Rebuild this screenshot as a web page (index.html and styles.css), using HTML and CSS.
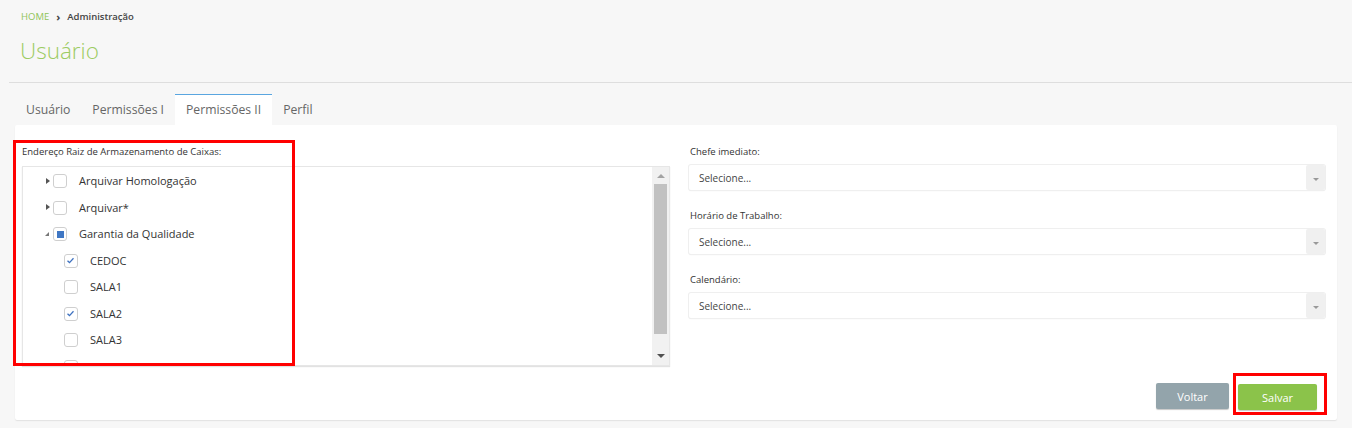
FILE: index.html
```html
<!DOCTYPE html>
<html lang="pt">
<head>
<meta charset="utf-8">
<title>Usuário</title>
<link rel="stylesheet" href="styles.css">
</head>
<body>
<div class="page">
  <nav class="crumbs">
    <span class="crumb-home">HOME</span>
    <span class="crumb-sep">&#x203A;</span>
    <span class="crumb-cur">Administração</span>
  </nav>
  <h1 class="title">Usuário</h1>
  <div class="rule"></div>
  <ul class="tabs">
    <li class="tab">Usuário</li>
    <li class="tab">Permissões I</li>
    <li class="tab active">Permissões II</li>
    <li class="tab">Perfil</li>
  </ul>
  <section class="panel">
    <div class="cols">
      <div class="col-left">
        <div class="highlight highlight-tree"></div>
        <label class="lbl">Endereço Raiz de Armazenamento de Caixas:</label>
        <div class="tree">
          <ul class="tree-list">
            <li class="node"><span class="tog closed"></span><span class="cb"></span><span class="txt">Arquivar Homologação</span></li>
            <li class="node"><span class="tog closed"></span><span class="cb"></span><span class="txt">Arquivar*</span></li>
            <li class="node"><span class="tog open"></span><span class="cb partial"><i></i></span><span class="txt">Garantia da Qualidade</span></li>
            <li class="node child"><span class="cb checked"><svg viewBox="0 0 13 13" width="13" height="13"><path d="M3.5 6.8 L5.5 8.6 L9.5 4.3" fill="none" stroke="#3f72c0" stroke-width="1.3"/></svg></span><span class="txt">CEDOC</span></li>
            <li class="node child"><span class="cb"></span><span class="txt">SALA1</span></li>
            <li class="node child"><span class="cb checked"><svg viewBox="0 0 13 13" width="13" height="13"><path d="M3.5 6.8 L5.5 8.6 L9.5 4.3" fill="none" stroke="#3f72c0" stroke-width="1.3"/></svg></span><span class="txt">SALA2</span></li>
            <li class="node child"><span class="cb"></span><span class="txt">SALA3</span></li>
            <li class="node child"><span class="cb"></span></li>
          </ul>
          <div class="sbar">
            <span class="sarrow up"></span>
            <div class="strack"><div class="sthumb"></div></div>
            <span class="sarrow down"></span>
          </div>
        </div>
      </div>
      <div class="col-right">
        <div class="field">
          <label class="lbl">Chefe imediato:</label>
          <div class="select"><span class="sel-txt">Selecione...</span><span class="sel-btn"><span class="caret"></span></span></div>
        </div>
        <div class="field">
          <label class="lbl">Horário de Trabalho:</label>
          <div class="select"><span class="sel-txt">Selecione...</span><span class="sel-btn"><span class="caret"></span></span></div>
        </div>
        <div class="field">
          <label class="lbl">Calendário:</label>
          <div class="select"><span class="sel-txt">Selecione...</span><span class="sel-btn"><span class="caret"></span></span></div>
        </div>
      </div>
    </div>
    <div class="actions">
      <button class="btn btn-back">Voltar</button>
      <div class="save-wrap">
        <button class="btn btn-save">Salvar</button>
      </div>
    </div>
  </section>
</div>
</body>
</html>
```

FILE: styles.css
```css
* { box-sizing: border-box; }
html, body { margin: 0; padding: 0; }
body {
  background: #f7f7f7;
  font-family: "Open Sans", "Liberation Sans", sans-serif;
  color: #333;
  width: 1352px;
  height: 428px;
  overflow: hidden;
}
.page { padding: 0 0 0 9px; }
.crumbs {
  padding: 8px 0 0 12px;
  height: 25px;
  font-size: 9.5px;
  display: flex;
  align-items: center;
  gap: 5px;
}
.crumb-home { color: #8fc459; }
.crumb-sep { color: #444; font-weight: 700; font-size: 11px; margin: 0 2px; }
.crumb-cur { color: #444; font-weight: 600; }
.title {
  margin: 0;
  padding: 11px 0 0 11px;
  height: 46px;
  font-size: 22.5px;
  font-weight: 300;
  color: #9ccb62;
  line-height: 30px;
}
.rule { height: 1px; background: #dedede; margin-top: 11px; }
.tabs {
  list-style: none;
  margin: 11px 0 0 6px;
  padding: 0;
  display: flex;
  height: 31px;
}
.tab {
  padding: 0 11px;
  font-size: 12.2px;
  color: #666;
  line-height: 28px;
  border-top: 2px solid transparent;
}
.tab.active {
  background: #fff;
  border-top: 1px solid #5aa6e0;
  padding: 1px 11px 0;
}
.panel {
  background: #fff;
  margin: 0 15px 0 6px;
  height: 295px;
  border-radius: 2px;
  box-shadow: 0 1px 1px #e2e2e2;
  padding: 20px 12px 0 7px;
}
.cols {
  display: grid;
  grid-template-columns: 648px 1fr;
  gap: 19px;
}
.col-left { position: relative; }
.highlight {
  position: absolute;
  border: 3px solid #f00;
  pointer-events: none;
  z-index: 2;
}
.highlight-tree { left: -9px; top: -5px; width: 282px; height: 226px; }
.lbl {
  display: block;
  font-size: 9.5px;
  color: #333;
  line-height: 13px;
  margin-bottom: 8px;
}
.tree {
  display: flex;
  height: 200px;
  border: 1px solid #e6e6e6;
  box-shadow: 0 1px 1px #e2e2e2;
  overflow: hidden;
}
.tree-list {
  flex: 1;
  list-style: none;
  margin: 0;
  padding: 1px 0 0 0;
  overflow: hidden;
}
.node {
  height: 26.5px;
  display: flex;
  align-items: center;
  padding-left: 20px;
  font-size: 11px;
  color: #333;
}
.node.child { padding-left: 41px; }
.tog {
  width: 10px;
  height: 13px;
  position: relative;
}
.tog.closed::before {
  content: "";
  position: absolute;
  left: 3px; top: 3px;
  border-left: 4px solid #555;
  border-top: 3.5px solid transparent;
  border-bottom: 3.5px solid transparent;
}
.tog.open::before {
  content: "";
  position: absolute;
  left: 2px; top: 4px;
  border-right: 4px solid #777;
  border-top: 4px solid transparent;
}
.cb {
  width: 14px;
  height: 14px;
  border: 1px solid #cfcfcf;
  border-radius: 3px;
  background: #fff;
  margin-right: 12px;
  position: relative;
  flex: none;
  display: flex;
  align-items: center;
  justify-content: center;
}
.cb.checked svg { display: block; margin-left: -1px; }
.cb.partial i {
  width: 7px; height: 7px;
  background: #3f77c4;
  display: block;
}
.txt { line-height: 14px; }
.sbar {
  width: 17px;
  flex: none;
  background: #f1f1f1;
  display: flex;
  flex-direction: column;
  align-items: center;
}
.sarrow { width: 0; height: 0; }
.sarrow.up {
  margin: 7px 0 6px;
  border-bottom: 4px solid #a3a3a3;
  border-left: 4px solid transparent;
  border-right: 4px solid transparent;
}
.strack { flex: 1; width: 100%; padding: 0 2px; }
.sthumb { height: 150px; background: #c1c1c1; }
.sarrow.down {
  margin: 0 0 7px;
  border-top: 4px solid #505050;
  border-left: 4px solid transparent;
  border-right: 4px solid transparent;
}
.field { margin-bottom: 13px; }
.field .lbl { margin: 0 0 0 1px; height: 20px; line-height: 13px; }
.select {
  height: 25px;
  display: flex;
  align-items: center;
  border-radius: 2px;
  box-shadow: 0 0 0 1px #efefef, 0 1px 1px #e0e0e0;
  background: #fff;
  padding-left: 10px;
  margin-top: -6px;
}
.sel-txt { flex: 1; font-size: 10px; color: #444; }
.sel-btn {
  width: 19px;
  height: 25px;
  background: #f0f0f0;
  border-radius: 2px;
  display: flex;
  align-items: center;
  justify-content: center;
  padding-top: 3px;
}
.caret {
  border-top: 3.5px solid #999;
  border-left: 3px solid transparent;
  border-right: 3px solid transparent;
}
.field { height: 64px; margin: 0; }
.field .select { margin-top: 0; }
.actions {
  display: flex;
  justify-content: flex-end;
  align-items: center;
  margin-top: 7px;
  margin-right: -2px;
}
.btn {
  font-family: "Open Sans", "Liberation Sans", sans-serif;
  font-size: 11px;
  color: #fff;
  border: none;
  border-radius: 2px;
  height: 26px;
  box-shadow: 0 1px 1px #c8c8c8;
  cursor: pointer;
}
.btn-back { background: #93a4ab; width: 73px; margin-right: 4px; margin-top: 4px; }
.save-wrap {
  border: 3px solid #f00;
  padding: 8px 7px 2px 2px;
}
.btn-save { background: #8bc34a; width: 79px; display: block; }
```
